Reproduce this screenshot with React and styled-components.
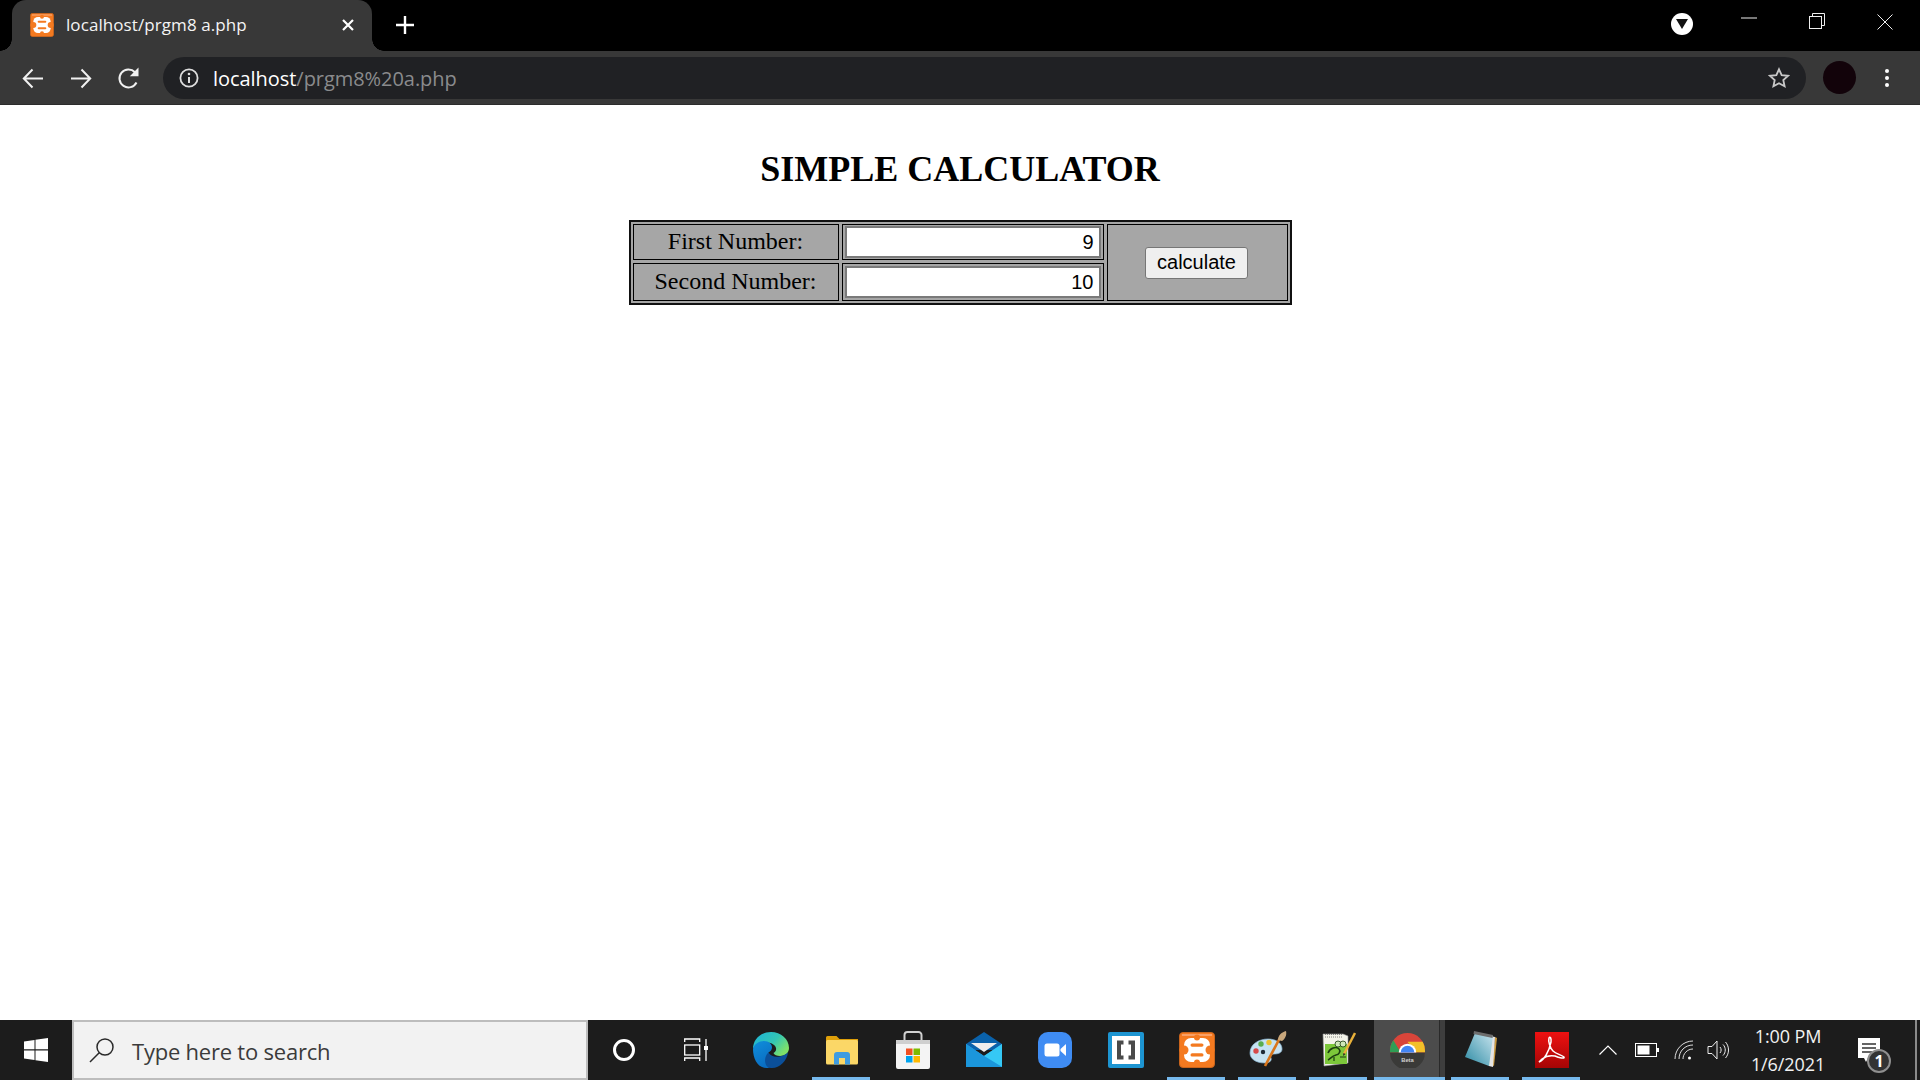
import React from "react";
import styled, { createGlobalStyle } from "styled-components";

const Global = createGlobalStyle`
  html, body { margin: 0; padding: 0; height: 100%; overflow: hidden; background: #fff; }
  #root { height: 100%; }
  * { box-sizing: border-box; }
`;

const Screen = styled.div`
  display: flex; flex-direction: column; width: 1920px; height: 1080px; overflow: hidden;
  font-family: "Open Sans", "Noto Sans", sans-serif;
`;

const TabStrip = styled.header`
  display: flex; align-items: stretch; height: 51px; flex: none; background: #000; padding-left: 12px;
`;
const Tab = styled.div`
  position: relative; display: flex; align-items: center; width: 360px; background: #383838;
  border-radius: 14px 14px 0 0; padding: 0 17px 2px 18px; color: #fff;
  &::before, &::after { content: ""; position: absolute; bottom: 0; width: 12px; height: 12px; }
  &::before { left: -12px; background: radial-gradient(circle at 0 0, #000 11.5px, #383838 12px); }
  &::after { right: -12px; background: radial-gradient(circle at 100% 0, #000 11.5px, #383838 12px); }
`;
const TabTitle = styled.span`
  flex: 1; margin-left: 12px; font-size: 17px; letter-spacing: 0.08px; white-space: nowrap; color: #f4f4f4;
`;
const NewTab = styled.div`
  display: flex; align-items: center; margin-left: 23px; padding-bottom: 2px;
`;
const StripSpacer = styled.div`flex: 1;`;
const WindowControls = styled.div`
  display: flex; align-items: flex-start; padding: 10px 18px 0 0;
`;
const ProfileDrop = styled.div`
  width: 22px; height: 22px; margin: 3px 39px 0 0; border-radius: 50%; background: #fff;
  display: flex; align-items: center; justify-content: center;
`;
const WinButton = styled.div`
  width: ${p => p.$w}px; height: 24px; padding-bottom: ${p => p.$pb || 0}px;
  display: flex; align-items: center; justify-content: center;
`;

const Toolbar = styled.div`
  display: flex; align-items: center; height: 54px; flex: none; background: #383838; padding: 0 0 0 21px;
  border-bottom: 1px solid #2c2c2c;
`;
const NavButton = styled.div`
  width: 24px; height: 24px; margin-right: 24px; display: flex; align-items: center; justify-content: center;
`;
const Omnibox = styled.div`
  display: flex; align-items: center; width: 1643px; height: 42px; margin-left: -2px; border-radius: 21px;
  background: #202124; padding: 0 16px 0 16px; font-size: 20px;
`;
const UrlText = styled.div`
  flex: 1; margin-left: 14px; padding-top: 1px; white-space: nowrap; letter-spacing: -0.05px; color: #8a8b8d;
  & b { font-weight: 400; color: #fff; }
`;
const Avatar = styled.div`
  width: 33px; height: 33px; margin-left: 17px; border-radius: 50%; background: #12030a; flex: none;
`;
const Kebab = styled.div`
  display: flex; flex-direction: column; gap: 3px; margin-left: 29px;
  & i { display: block; width: 4px; height: 4px; border-radius: 50%; background: #fff; }
`;

const Page = styled.main`
  flex: 1; background: #fff; padding-top: 44px; font-family: "Liberation Serif", "Times New Roman", serif; color: #000;
`;
const Title = styled.h1`
  margin: 0 0 30px; font-size: 36px; line-height: 41px; font-weight: 700; text-align: center;
`;
const CalcTable = styled.table`
  margin: 0 auto; border: 1px solid #111; box-shadow: inset 0 0 0 1px #111; border-spacing: 3px;
  background: #a6a6a6; border-collapse: separate;
`;
const LabelCell = styled.td`
  width: 206px; height: ${p => p.$h}px; border: 1px solid #000; padding: 0 0 ${p => p.$pb || 0}px; text-align: center;
  font-size: 24px; line-height: 30px;
`;
const InputCell = styled.td`
  width: 262px; border: 1px solid #000; padding: 1px 2px;
`;
const ActionCell = styled.td`
  width: 181px; border: 1px solid #000; padding: 0 1px 0 0; text-align: center;
`;
const NumberField = styled.input`
  display: block; width: 100%; height: 32px; border: 2px solid #7a7a7a; background: #fff;
  padding: 0 5px; text-align: right; font: 20px "Liberation Sans", Arial, sans-serif; color: #000; outline: none;
`;
const CalcButton = styled.button`
  width: 103px; height: 32px; padding: 0; background: #efefef; border: 1px solid #767676; border-radius: 3px;
  font: 20px "Liberation Sans", Arial, sans-serif; color: #000;
`;

const Taskbar = styled.footer`
  display: flex; align-items: stretch; height: 60px; flex: none; background: #1c1c1c; color: #fff;
`;
const StartButton = styled.div`
  width: 72px; display: flex; align-items: center; justify-content: center;
`;
const SearchBox = styled.div`
  width: 516px; display: flex; align-items: center; background: #f2f2f2; border: 2px solid #bdbdbd;
  padding-left: 15px; color: #3b3b3b; font-size: 22px; letter-spacing: -0.22px;
`;
const SearchLabel = styled.span`margin-left: 17px; padding-top: 2px;`;
const TaskSlot = styled.div`
  position: relative; width: ${p => p.$w || 71}px; flex: none; display: flex; align-items: center; justify-content: center;
  background: ${p => p.$active ? "linear-gradient(90deg, #4c4c4c calc(100% - 6px), #2a2a2a calc(100% - 6px), #2a2a2a calc(100% - 5px), #3e3e3e calc(100% - 5px))" : "transparent"};
  padding-right: ${p => p.$active ? 4 : 0}px;
  &::after {
    content: ""; display: ${p => p.$open ? "block" : "none"}; position: absolute; bottom: 0; height: 3px;
    left: ${p => p.$active ? 0 : 6}px; right: ${p => p.$active ? 0 : 7}px; background: #76b9ed;
  }
`;
const Tray = styled.div`
  flex: 1; display: flex; align-items: center; min-width: 0;
`;
const TrayIcon = styled.div`
  width: ${p => p.$w}px; flex: none; display: flex; align-items: center; justify-content: center;
`;
const Clock = styled.div`
  width: 112px; flex: none; text-align: center; font-size: 18px; line-height: 28px; color: #f2f2f2; letter-spacing: -0.1px;
`;
const Notify = styled.div`
  position: relative; width: 40px; height: 40px; margin-left: 12px; flex: none; display: flex; align-items: center;
`;
const NotifyBadge = styled.span`
  position: absolute; left: 11px; top: 19px; width: 24px; height: 24px; border-radius: 50%; background: #333;
  border: 2px solid #8f8f8f; font-size: 16px; font-weight: 700; line-height: 20px; text-align: center; color: #fff;
`;
const ShowDesktop = styled.div`
  width: 2px; height: 100%; margin-left: auto; margin-right: 3px; background: #8a8a8a;
`;
const FlipX = styled.span`
  display: flex; transform: scaleX(${p => p.$flip ? -1 : 1});
`;
const BetaText = styled.text`
  font: 700 6px "Liberation Sans", Arial, sans-serif; fill: #cfcfcf; text-anchor: middle;
`;

const Xampp = ({ size = 36 }) => (
  <svg width={size} height={size} viewBox="0 0 36 36">
    <rect x="0.5" y="0.5" width="35" height="35" rx="3.5" fill="#f47a20" stroke="#c9641c" />
    <rect x="3" y="2" width="30" height="2" fill="#f9a066" />
    <rect x="5" y="6" width="26" height="24" rx="7" fill="#fff" />
    <circle cx="5" cy="18" r="4.500" fill="#f47a20" />
    <circle cx="31" cy="18" r="4.500" fill="#f47a20" />
    <circle cx="18" cy="5.500" r="3" fill="#f47a20" />
    <circle cx="18" cy="30.500" r="3" fill="#f47a20" />
    <rect x="11.500" y="11.500" width="13" height="3.200" rx="1.600" fill="#f47a20" />
    <rect x="11.500" y="21.300" width="13" height="3.200" rx="1.600" fill="#f47a20" />
  </svg>
);

const BackIcon = () => (
  <svg width="24" height="24" viewBox="0 0 24 24" fill="none" stroke="#f1f1f1" strokeWidth="2">
    <path d="M22 12.500H3M11.500 3.500 2.800 12.500l8.700 9" />
  </svg>
);

const ReloadIcon = () => (
  <svg width="24" height="24" viewBox="0 0 24 24" fill="none">
    <path d="M19.500 16.500A9 9 0 1 1 18 6.200" stroke="#f1f1f1" strokeWidth="2" />
    <path d="M21.500 1.500v8.700h-8.700z" fill="#f1f1f1" />
  </svg>
);

const Edge = () => (
  <svg width="38" height="38" viewBox="0 0 38 38">
    <defs>
      <linearGradient id="eg1" x1="0" y1="0" x2="1" y2="0.6"><stop offset="0" stopColor="#1bb4dc" /><stop offset="0.6" stopColor="#33c6b4" /><stop offset="1" stopColor="#7fe069" /></linearGradient>
      <linearGradient id="eg2" x1="0" y1="0" x2="0.5" y2="1"><stop offset="0" stopColor="#0f8fdc" /><stop offset="1" stopColor="#0a6cc0" /></linearGradient>
    </defs>
    <path d="M1 18C1 8 9 1 19 1c10 0 18 7 18 16 0 5-4 8-9 8-3 0-6-1-6.500-3 2-1 3-3 2.500-5-1-4-6-6-11-5C7 13 2 15 1 18z" fill="url(#eg1)" />
    <path d="M1 18c1-5 6-8 11-8 5 0 8 3 8 6.500 0 2-1.500 4-3.500 5-1 3 1 8 6 12-2 1-4 3.500-8 3.500C6 37 1 28 1 18z" fill="url(#eg2)" />
    <path d="M16.500 21.500c2.500 4 7 5 11 4 4-.5 7-3 8.500-4-1 8-8 15.500-16 15.500-1.500 0-3-.3-4-.7-4-3-4-11 .5-14.800z" fill="#0b4f99" />
  </svg>
);

const Explorer = () => (
  <svg width="34" height="30" viewBox="0 0 34 30">
    <path d="M1 2.500A1.500 1.500 0 0 1 2.500 1h9l3 3H33v8H1z" fill="#dfa00a" />
    <rect x="1" y="5" width="32" height="24.500" rx="1.500" fill="#fbd767" />
    <path d="M9 29.500V20a3 3 0 0 1 3-3h10a3 3 0 0 1 3 3v9.500h-5V23h-6v6.500z" fill="#3f9ce0" />
  </svg>
);

const Store = () => (
  <svg width="36" height="38" viewBox="0 0 36 38">
    <path d="M9.500 10V4a3 3 0 0 1 3-3h11a3 3 0 0 1 3 3v6" fill="none" stroke="#d0d0d0" strokeWidth="2" />
    <path d="M1 9h34v27a2 2 0 0 1-2 2H3a2 2 0 0 1-2-2z" fill="#f4f4f4" />
    <rect x="1" y="9" width="34" height="4" fill="#cfcfcf" />
    <rect x="11" y="17.500" width="6.500" height="6.500" fill="#f25022" />
    <rect x="18.500" y="17.500" width="6.500" height="6.500" fill="#7fba00" />
    <rect x="11" y="25" width="6.500" height="6.500" fill="#00a4ef" />
    <rect x="18.500" y="25" width="6.500" height="6.500" fill="#ffb900" />
  </svg>
);

const Mail = () => (
  <svg width="36" height="36" viewBox="0 0 36 36">
    <path d="M0 12 18 0l18 12v6H0z" fill="#0a62ab" />
    <path d="M5 11h26l-13 9z" fill="#eee" />
    <path d="M0 12l18 12 18-12v23H0z" fill="#28a8ea" />
    <path d="M36 12v23L18 24z" fill="#35c8f5" />
    <path d="M0 35V12l18 12 18 11z" fill="#1b96db" />
  </svg>
);

const Zoom = () => (
  <svg width="34" height="36" viewBox="0 0 34 36">
    <rect width="34" height="36" rx="10" fill="#3f8cf3" />
    <rect x="6.500" y="11.500" width="15" height="13" rx="2.500" fill="#fff" />
    <path d="M22.500 17l5.500-5v12l-5.500-5z" fill="#fff" />
  </svg>
);

const Brackets = () => (
  <svg width="36" height="36" viewBox="0 0 36 36">
    <rect width="36" height="36" rx="2" fill="#1d95d2" />
    <rect x="4" y="4" width="28" height="28" fill="#fff" />
    <path d="M15.500 8.500H9v19h6.500v-4H13v-11h2.500zM20.500 8.500H27v19h-6.500v-4H23v-11h-2.500z" fill="#4a4a4a" />
  </svg>
);

const Palette = () => (
  <svg width="40" height="40" viewBox="0 0 40 40">
    <path d="M2 23c0-9 9-14 18-14 8 0 14 4 14 10 0 4-4 5-8 5-3 0-4 2-3 4 1 3-2 5-6 5-9 0-15-4-15-10z" fill="#c6e2f2" stroke="#8cb9d6" strokeWidth="0.700" />
    <circle cx="8" cy="21" r="2.700" fill="#d64a4a" />
    <circle cx="13" cy="14" r="2.700" fill="#5aad4e" />
    <circle cx="21" cy="12.500" r="2.700" fill="#eec02e" />
    <circle cx="15" cy="22" r="2.200" fill="#1e2a38" />
    <path d="M17 36 33 6" stroke="#d9761c" strokeWidth="2.600" />
    <path d="M30 10c0-5 4-8 8-9 1 4-1 8-4 10z" fill="#c8a77c" />
  </svg>
);

const NotepadPP = () => (
  <svg width="34" height="36" viewBox="0 0 34 36">
    <path d="M1 2h20l5 2v27l-24 3z" fill="#f4f4ea" stroke="#999" strokeWidth="0.600" />
    <path d="M3 2.500h18M3 5h18" stroke="#777" strokeWidth="0.900" strokeDasharray="1 1" />
    <rect x="3" y="12" width="22" height="20" fill="#7cc73a" />
    <path d="M6 21c2-5 8-7 11-4 2 2 0 6-3 6-4 1-6 4-8 5" fill="none" stroke="#1c3d10" strokeWidth="1.600" />
    <circle cx="16" cy="12" r="3" fill="#cfe8b8" stroke="#1c3d10" strokeWidth="0.800" />
    <circle cx="21" cy="12" r="3" fill="#cfe8b8" stroke="#1c3d10" strokeWidth="0.800" />
    <path d="M12 25v4M18 25h6" stroke="#1c3d10" strokeWidth="1.200" />
    <path d="M22 22 33 1" stroke="#e9b13a" strokeWidth="2.500" />
    <path d="M21 24l.5-3 2 1z" fill="#222" />
  </svg>
);

const Chrome = () => (
  <svg width="35" height="35" viewBox="0 0 36 36">
    <circle cx="18" cy="18" r="18" fill="#d9453a" />
    <path d="M18 9h15.600A18 18 0 0 1 36 18v2H26z" fill="#f3c029" />
    <path d="M3.500 7.500 11 20H0v-2c0-4 1.300-7.500 3.500-10.500z" fill="#2f9e55" />
    <path d="M0 20h36a18 18 0 0 1-36 0z" fill="#3a3a38" />
    <path d="M9 20a9 9 0 1 1 18 0z" fill="#fff" />
    <path d="M11 20a7 7 0 1 1 14 0z" fill="#4285f4" />
    <BetaText x="18" y="30">Beta</BetaText>
  </svg>
);

const Notepad = () => (
  <svg width="36" height="40" viewBox="0 0 36 40">
    <defs><linearGradient id="npg" x1="0" y1="1" x2="1" y2="0"><stop offset="0" stopColor="#2b8aa3" /><stop offset="1" stopColor="#c8e4ee" /></linearGradient></defs>
    <path d="M32 7l2 1-3 28-2-1z" fill="#c9993f" />
    <path d="M12 3l20 4-2 30-4-1z" fill="#e4e4e4" />
    <path d="M12 3l18 3-4 30-24-9z" fill="url(#npg)" />
    <path d="M11 1l19 4-.500 3-19-4z" fill="#6d6d6d" />
  </svg>
);

const Acrobat = () => (
  <svg width="34" height="36" viewBox="0 0 34 36" fill="none">
    <defs><linearGradient id="acg" x1="0" y1="0" x2="0" y2="1"><stop offset="0" stopColor="#ee1111" /><stop offset="1" stopColor="#a50505" /></linearGradient></defs>
    <rect width="34" height="36" fill="url(#acg)" />
    <path d="M4 30c5-2 10-10 12-20 .5-4-1-6-2-4-1 3 1 10 4 13 3 3 9 4 11 6 1 2-5 1-9-1-5-1-9 0-13 3-2 2-3 3-3 3z" stroke="#fff" strokeWidth="1.500" />
  </svg>
);

const Windows = () => (
  <svg width="24" height="24" viewBox="0 0 24 24" fill="#fff">
    <path d="M0 3.400 10.500 2v9.300H0zM11.500 1.800 24 0v11.300H11.500zM0 12.500h10.500V22L0 20.600zM11.500 12.500H24V24l-12.500-1.800z" />
  </svg>
);

const TaskView = () => (
  <svg width="26" height="24" viewBox="0 0 26 24" fill="none" stroke="#fff" strokeWidth="1.300">
    <path d="M0.700 4V1h15v3M0.700 23v-3h15v3" />
    <rect x="0.700" y="7" width="15" height="10" />
    <path d="M22 1v22" />
    <rect x="20" y="8" width="4" height="4" fill="#fff" stroke="none" />
  </svg>
);

export default function App() {
  return (
    <Screen>
      <Global />
      <TabStrip>
        <Tab>
          <Xampp size={24} />
          <TabTitle>localhost/prgm8 a.php</TabTitle>
          <svg width="14" height="14" viewBox="0 0 14 14" stroke="#fff" strokeWidth="2.200"><path d="M2 2l10 10M12 2 2 12" /></svg>
        </Tab>
        <NewTab>
          <svg width="20" height="20" viewBox="0 0 20 20" stroke="#fff" strokeWidth="2.400"><path d="M10 1v18M1 10h18" /></svg>
        </NewTab>
        <StripSpacer />
        <WindowControls>
          <ProfileDrop>
            <svg width="12" height="10" viewBox="0 0 12 10"><path d="M0 0h12L6 10z" fill="#111" /></svg>
          </ProfileDrop>
          <WinButton $w={34} $pb={8}>
            <svg width="16" height="2" viewBox="0 0 16 2"><path d="M0 1h16" stroke="#eee" strokeWidth="1" /></svg>
          </WinButton>
          <WinButton $w={102} $pb={3}>
            <svg width="16" height="16" viewBox="0 0 16 16" fill="none" stroke="#eee"><path d="M3.500 3V.5h12v12H12.500" /><rect x="0.500" y="3.500" width="12" height="12" /></svg>
          </WinButton>
          <WinButton $w={34}>
            <svg width="16" height="16" viewBox="0 0 16 16" stroke="#eee"><path d="M.5.500l15 15M15.500.500l-15 15" /></svg>
          </WinButton>
        </WindowControls>
      </TabStrip>

      <Toolbar>
        <NavButton><BackIcon /></NavButton>
        <NavButton><FlipX $flip><BackIcon /></FlipX></NavButton>
        <NavButton><ReloadIcon /></NavButton>
        <Omnibox>
          <svg width="20" height="20" viewBox="0 0 20 20" fill="none">
            <circle cx="10" cy="10" r="8.600" stroke="#dedede" strokeWidth="1.800" />
            <path d="M10 9v6" stroke="#dedede" strokeWidth="2" />
            <circle cx="10" cy="6" r="1.300" fill="#dedede" />
          </svg>
          <UrlText><b>localhost</b>/prgm8%20a.php</UrlText>
          <svg width="22" height="22" viewBox="0 0 24 24" fill="none" stroke="#c8c8c8" strokeWidth="2"><path d="M12 2.500l2.900 6.300 6.900.8-5.100 4.700 1.400 6.800-6.100-3.400-6.100 3.400 1.400-6.800-5.100-4.700 6.900-.8z" /></svg>
        </Omnibox>
        <Avatar />
        <Kebab><i /><i /><i /></Kebab>
      </Toolbar>

      <Page>
        <Title>SIMPLE CALCULATOR</Title>
        <CalcTable>
          <tbody>
            <tr>
              <LabelCell $h={36} $pb={2}>First Number:</LabelCell>
              <InputCell><NumberField readOnly value="9" /></InputCell>
              <ActionCell rowSpan={2}><CalcButton>calculate</CalcButton></ActionCell>
            </tr>
            <tr>
              <LabelCell $h={38} $pb={2}>Second Number:</LabelCell>
              <InputCell><NumberField readOnly value="10" /></InputCell>
            </tr>
          </tbody>
        </CalcTable>
      </Page>

      <Taskbar>
        <StartButton><Windows /></StartButton>
        <SearchBox>
          <svg width="26" height="26" viewBox="0 0 26 26" fill="none" stroke="#2a2a2a" strokeWidth="1.500"><circle cx="16" cy="10" r="8" /><path d="M10.200 15.800 1 25" /></svg>
          <SearchLabel>Type here to search</SearchLabel>
        </SearchBox>
        <TaskSlot $w={71}>
          <svg width="24" height="24" viewBox="0 0 24 24" fill="none" stroke="#fff" strokeWidth="3"><circle cx="12" cy="12" r="9.500" /></svg>
        </TaskSlot>
        <TaskSlot $w={76}><TaskView /></TaskSlot>
        <TaskSlot><Edge /></TaskSlot>
        <TaskSlot $open><Explorer /></TaskSlot>
        <TaskSlot><Store /></TaskSlot>
        <TaskSlot><Mail /></TaskSlot>
        <TaskSlot><Zoom /></TaskSlot>
        <TaskSlot><Brackets /></TaskSlot>
        <TaskSlot $open><Xampp size={36} /></TaskSlot>
        <TaskSlot $open><Palette /></TaskSlot>
        <TaskSlot $open><NotepadPP /></TaskSlot>
        <TaskSlot $open $active $w={71}><Chrome /></TaskSlot>
        <TaskSlot $open><Notepad /></TaskSlot>
        <TaskSlot $open><Acrobat /></TaskSlot>
        <Tray>
          <TrayIcon $w={42}>
            <svg width="18" height="10" viewBox="0 0 18 10" fill="none" stroke="#fff" strokeWidth="1.200"><path d="M.5 9.500 9 1l8.500 8.500" /></svg>
          </TrayIcon>
          <TrayIcon $w={35}>
            <svg width="24" height="14" viewBox="0 0 24 14"><rect x="0.500" y="0.500" width="21" height="13" fill="none" stroke="#fff" /><rect x="2.500" y="2.500" width="12" height="9" fill="#fff" /><rect x="22" y="5" width="2" height="4" fill="#fff" /></svg>
          </TrayIcon>
          <TrayIcon $w={39}>
            <svg width="20" height="20" viewBox="0 0 20 20" fill="none" stroke="#ddd" strokeWidth="1"><path d="M1 19C1 9 9 1 19 1M5 19c0-8 6-14 14-14M9 19c0-5 4-10 10-10" /><circle cx="15.500" cy="18" r="1.500" fill="#fff" stroke="none" /></svg>
          </TrayIcon>
          <TrayIcon $w={29}>
            <svg width="22" height="20" viewBox="0 0 22 20" fill="none" stroke="#eee" strokeWidth="1"><path d="M1 6.500h4L10 1v18l-5-5.500H1zM13 7c1.500 2 1.500 4 0 6M16 4.500c3 3 3 8 0 11M18.500 2c4 4.500 4 11.500 0 16" /></svg>
          </TrayIcon>
          <Clock>1:00 PM<br />1/6/2021</Clock>
          <Notify>
            <svg width="26" height="28" viewBox="0 0 26 28"><path d="M2 2h22v20H12l-2 4-2-4H2z" fill="#fff" /><path d="M6 8h14M6 12h14M6 16h10" stroke="#333" strokeWidth="1.300" /></svg>
            <NotifyBadge>1</NotifyBadge>
          </Notify>
          <ShowDesktop />
        </Tray>
      </Taskbar>
    </Screen>
  );
}
